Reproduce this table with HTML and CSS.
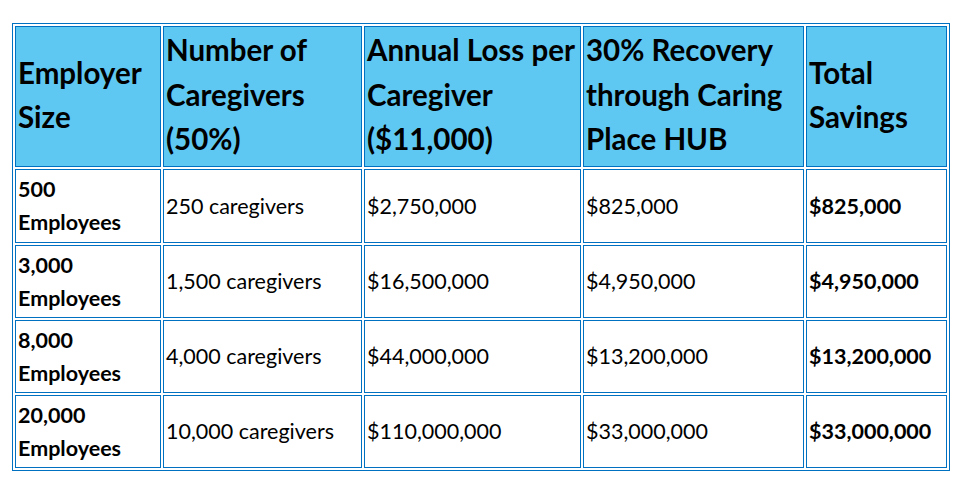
FILE: index.html
```html
<!DOCTYPE html>
<html lang="en">
<head>
<meta charset="utf-8">
<title>Caregiver Savings</title>
<link rel="stylesheet" href="styles.css">
</head>
<body>
<table class="savings">
  <thead>
    <tr class="head-row">
      <th class="c1">Employer Size</th>
      <th class="c2">Number of Caregivers (50%)</th>
      <th class="c3">Annual Loss per Caregiver ($11,000)</th>
      <th class="c4">30% Recovery through Caring Place HUB</th>
      <th class="c5">Total Savings</th>
    </tr>
  </thead>
  <tbody>
    <tr class="row first">
      <td class="strong">500<br>Employees</td>
      <td>250 caregivers</td>
      <td>$2,750,000</td>
      <td>$825,000</td>
      <td class="strong">$825,000</td>
    </tr>
    <tr class="row">
      <td class="strong">3,000<br>Employees</td>
      <td>1,500 caregivers</td>
      <td>$16,500,000</td>
      <td>$4,950,000</td>
      <td class="strong">$4,950,000</td>
    </tr>
    <tr class="row">
      <td class="strong">8,000<br>Employees</td>
      <td>4,000 caregivers</td>
      <td>$44,000,000</td>
      <td>$13,200,000</td>
      <td class="strong">$13,200,000</td>
    </tr>
    <tr class="row">
      <td class="strong">20,000<br>Employees</td>
      <td>10,000 caregivers</td>
      <td>$110,000,000</td>
      <td>$33,000,000</td>
      <td class="strong">$33,000,000</td>
    </tr>
  </tbody>
</table>
</body>
</html>
```

FILE: styles.css
```css
html, body {
  margin: 0;
  background: #ffffff;
}

body {
  padding: 23px 0 0 12px;
  font-family: Lato, "Liberation Sans", sans-serif;
  color: #000000;
}

.savings {
  width: 938px;
  table-layout: fixed;
  border-collapse: separate;
  border-spacing: 2px;
  border: 1px solid #0070c0;
}

.savings th,
.savings td {
  box-sizing: border-box;
  border: 1px solid #0070c0;
  padding: 0 2px;
  text-align: left;
  vertical-align: middle;
}

.savings th {
  background: #5fc8f2;
  font-size: 29.5px;
  font-weight: 700;
  line-height: 44.5px;
  padding-bottom: 3px;
}

.c1 { width: 146px; }
.c2 { width: 199px; }
.c3 { width: 217px; }
.c4 { width: 221px; }
.c5 { width: 141px; }

.head-row { height: 141px; }
.row { height: 73px; }
.row.first { height: 74px; }

.savings td {
  font-size: 21.5px;
  font-weight: 400;
  line-height: 33px;
}

.savings td.strong {
  font-weight: 700;
}
```
